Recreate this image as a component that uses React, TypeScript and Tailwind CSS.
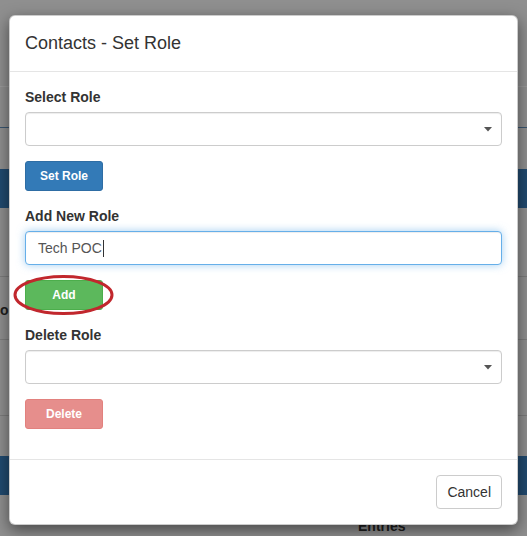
import React from "react";

const Caret = () => (
  <svg
    className="absolute right-[9px] top-[14px]"
    width="8"
    height="5"
    viewBox="0 0 8 5"
  >
    <path d="M0 0 L8 0 L4 4.5 Z" fill="#555" />
  </svg>
);

const SelectBox = () => (
  <div className="relative h-[34px] w-full rounded-[4px] border border-[#cccccc] bg-white shadow-[inset_0_1px_1px_rgba(0,0,0,0.075)]">
    <Caret />
  </div>
);

export default function App() {
  return (
    <div className="relative h-[536px] w-full overflow-hidden bg-[#8f8f8f] font-['Liberation_Sans',Arial,sans-serif] text-[14px] text-[#333]">
      {/* page behind the backdrop */}
      <div className="flex flex-col">
        <div className="h-[87px] border-b border-[#9a9a9a]" />
        <div className="h-[41px] border-b border-[#3a5670]" />
        <div className="h-[41px]" />
        <div className="h-[39px] bg-[#214a6f]" />
        <div className="h-[69px] border-b border-[#7c7c7c]" />
        <div className="flex h-[63px] items-center border-b border-[#7c7c7c]">
          <span className="mt-[4px] font-bold text-[#1e1e1e]">ol</span>
        </div>
        <div className="h-[76px] border-b border-[#7c7c7c]" />
        <div className="h-[40px]" />
        <div className="h-[39px] bg-[#214a6f]" />
        <div className="pl-[358px] pt-[21px] font-bold leading-[20px] text-[#1e1e1e]">Entries</div>
      </div>

      {/* modal */}
      <div className="absolute left-[9px] top-[15px] w-[509px] rounded-[6px] border border-[rgba(0,0,0,0.2)] bg-white shadow-[0_5px_15px_rgba(0,0,0,0.5)]">
        <div className="border-b border-[#e5e5e5] px-[15px] py-[15px]">
          <h4 className="m-0 text-[18px] leading-[25px] text-[#333]">Contacts - Set Role</h4>
        </div>

        <div className="p-[15px]">
          <div className="mb-[15px]">
            <label className="mb-[5px] block font-bold leading-[20px]">Select Role</label>
            <SelectBox />
          </div>
          <div className="mb-[15px]">
            <button className="h-[30px] w-[78px] rounded-[3px] border border-[#2e6da4] bg-[#337ab7] text-[12px] font-bold text-white">
              Set Role
            </button>
          </div>

          <div className="mb-[15px]">
            <label className="mb-[5px] block font-bold leading-[20px]">Add New Role</label>
            <div className="flex h-[34px] w-full items-center rounded-[4px] border border-[#66afe9] bg-white px-[12px] text-[#555] shadow-[inset_0_1px_1px_rgba(0,0,0,0.075),0_0_8px_rgba(102,175,233,0.6)]">
              <span>Tech POC</span>
              <span className="ml-[1px] h-[17px] w-px bg-[#333]" />
            </div>
          </div>
          <div className="mb-[15px]">
            <div className="relative inline-block">
              <button className="h-[30px] w-[78px] rounded-[3px] border border-[#4cae4c] bg-[#5cb85c] text-[12px] font-bold text-white">
                Add
              </button>
              <svg
                className="pointer-events-none absolute left-[-12px] top-[-6px]"
                width="102"
                height="42"
                viewBox="0 0 102 42"
              >
                <ellipse
                  cx="50.5"
                  cy="21"
                  rx="48.5"
                  ry="18.5"
                  fill="none"
                  stroke="#c1272d"
                  strokeWidth="3"
                />
              </svg>
            </div>
          </div>

          <div className="mb-[15px]">
            <label className="mb-[5px] block font-bold leading-[20px]">Delete Role</label>
            <SelectBox />
          </div>
          <div className="mb-[15px]">
            <button className="h-[30px] w-[78px] rounded-[3px] border border-[#d43f3a] bg-[#d9534f] text-[12px] font-bold text-white opacity-65">
              Delete
            </button>
          </div>
        </div>

        <div className="flex justify-end border-t border-[#e5e5e5] p-[15px]">
          <button className="h-[34px] rounded-[4px] border border-[#cccccc] bg-white px-[10px] text-[14px] text-[#333]">
            Cancel
          </button>
        </div>
      </div>
    </div>
  );
}
